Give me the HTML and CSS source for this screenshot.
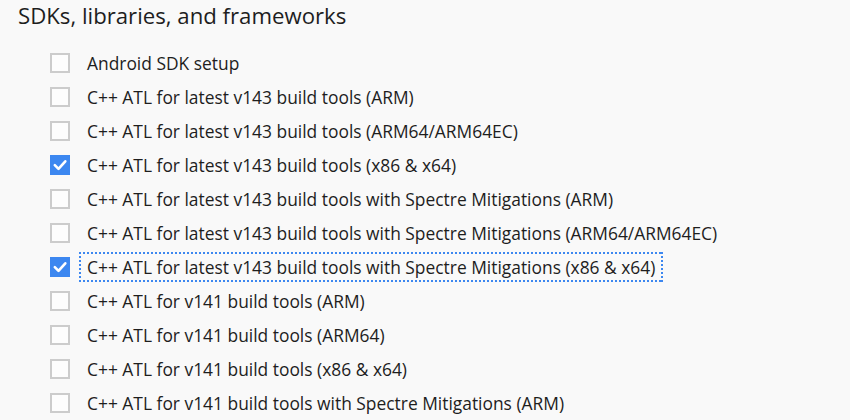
FILE: index.html
```html
<!DOCTYPE html>
<html>
<head>
<meta charset="utf-8">
<link rel="stylesheet" href="styles.css">
</head>
<body>
<section class="panel">
  <h2 class="title">SDKs, libraries, and frameworks</h2>
  <ul class="list">
    <li class="row"><span class="box"></span><span class="label">Android SDK setup</span></li>
    <li class="row"><span class="box"></span><span class="label">C++ ATL for latest v143 build tools (ARM)</span></li>
    <li class="row"><span class="box"></span><span class="label">C++ ATL for latest v143 build tools (ARM64/ARM64EC)</span></li>
    <li class="row"><span class="box checked"><svg viewBox="0 0 20 20" width="20" height="20"><path d="M4.8 10.2 L8.5 13.9 L15.3 6.3" fill="none" stroke="#fff" stroke-width="2.6" stroke-linecap="round" stroke-linejoin="round"/></svg></span><span class="label">C++ ATL for latest v143 build tools (x86 &amp; x64)</span></li>
    <li class="row"><span class="box"></span><span class="label">C++ ATL for latest v143 build tools with Spectre Mitigations (ARM)</span></li>
    <li class="row"><span class="box"></span><span class="label">C++ ATL for latest v143 build tools with Spectre Mitigations (ARM64/ARM64EC)</span></li>
    <li class="row"><span class="box checked"><svg viewBox="0 0 20 20" width="20" height="20"><path d="M4.8 10.2 L8.5 13.9 L15.3 6.3" fill="none" stroke="#fff" stroke-width="2.6" stroke-linecap="round" stroke-linejoin="round"/></svg></span><span class="label focused">C++ ATL for latest v143 build tools with Spectre Mitigations (x86 &amp; x64)</span></li>
    <li class="row"><span class="box"></span><span class="label">C++ ATL for v141 build tools (ARM)</span></li>
    <li class="row"><span class="box"></span><span class="label">C++ ATL for v141 build tools (ARM64)</span></li>
    <li class="row"><span class="box"></span><span class="label">C++ ATL for v141 build tools (x86 &amp; x64)</span></li>
    <li class="row"><span class="box"></span><span class="label">C++ ATL for v141 build tools with Spectre Mitigations (ARM)</span></li>
  </ul>
</section>
</body>
</html>
```
FILE: styles.css
```css
html, body {
  margin: 0;
  padding: 0;
  background: #f9f9f9;
  overflow: hidden;
}
body {
  font-family: "Open Sans", "Noto Sans", sans-serif;
  color: #1e1e1e;
}
.panel {
  padding: 0 0 0 18px;
}
.title {
  margin: 0;
  padding-top: 1px;
  height: 45px;
  font-size: 22.2px;
  font-weight: 400;
  line-height: 30px;
  color: #1e1e1e;
}
.list {
  list-style: none;
  margin: 0;
  padding: 0 0 0 32px;
}
.row {
  display: flex;
  align-items: center;
  height: 34px;
}
.box {
  box-sizing: border-box;
  width: 20px;
  height: 20px;
  border: 2px solid #cccccc;
  background: #fdfdfd;
  flex: none;
  display: flex;
  align-items: center;
  justify-content: center;
}
.box.checked {
  border: none;
  background: #3c87f0;
}
.label {
  margin-left: 9px;
  padding: 4px 8px 4px 8px;
  font-size: 17.4px;
  line-height: 22px;
}
.label.focused {
  background:
    repeating-linear-gradient(90deg, #3c87f0 0 2px, transparent 2px 4px) top left / 100% 2px no-repeat,
    repeating-linear-gradient(90deg, #3c87f0 0 2px, transparent 2px 4px) bottom left / 100% 2px no-repeat,
    repeating-linear-gradient(180deg, #3c87f0 0 2px, transparent 2px 4px) top left / 2px 100% no-repeat,
    repeating-linear-gradient(180deg, #3c87f0 0 2px, transparent 2px 4px) top right / 2px 100% no-repeat;
}
```
